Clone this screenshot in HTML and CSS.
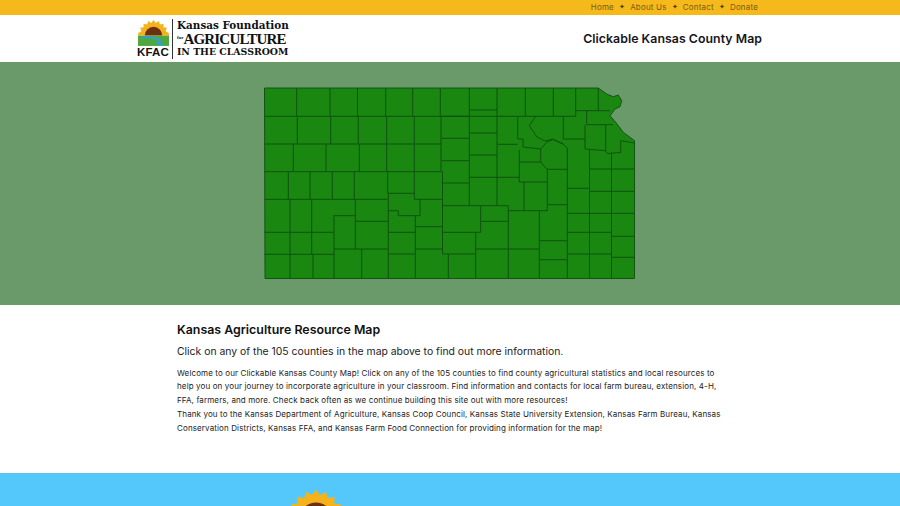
FILE: index.html
```html
<!DOCTYPE html>
<html lang="en">
<head>
<meta charset="utf-8">
<title>Clickable Kansas County Map</title>
<link rel="stylesheet" href="styles.css">
</head>
<body>
<svg class="defs" width="0" height="0" aria-hidden="true">
  <symbol id="sun" viewBox="0 0 30 26">
    <path fill="#f4b21c" d="M0 16 L0.200 13.400 L3.300 11.700 L2 8.500 L5.400 8 L5.400 4.500 L8.800 5.200 L9.900 1.900 L12.800 3.700 L15 0.900 L17.200 3.700 L20.100 1.900 L21.300 5.200 L24.600 4.500 L24.600 8 L28 8.500 L26.700 11.700 L29.800 13.400 L30 16 Z"/>
    <path fill="#6b2f14" d="M6.500 16 A8.500 8.500 0 0 1 23.500 16 Z"/>
    <rect y="16" width="30" height="10" fill="#4fa83d"/>
    <path fill="none" stroke="#2f9fd8" stroke-width="2" d="M4 18 C10 17 16 18 20 20 C23 21.500 22 23 18 23.500 L24 25"/>
  </symbol>
</svg>

<div class="topbar">
  <nav class="topnav">
    <a>Home</a><span class="star">✦</span><a>About Us</a><span class="star">✦</span><a>Contact</a><span class="star">✦</span><a>Donate</a>
  </nav>
</div>

<header class="header">
  <div class="logo">
    <div class="logo-mark">
      <svg class="logo-sun"><use href="#sun"/></svg>
      <div class="logo-kfac">KFAC</div>
    </div>
    <div class="logo-words">
      <div class="logo-l1">Kansas Foundation</div>
      <div class="logo-l2"><span class="logo-for">for</span>AGRICULTURE</div>
      <div class="logo-l3">IN THE CLASSROOM</div>
    </div>
  </div>
  <div class="site-title">Clickable Kansas County Map</div>
</header>

<section class="map-band">
  <svg class="map" viewBox="264 87 372 192" width="372" height="192" role="img" aria-label="Map of Kansas counties">
    <path class="state" d="M264.500 88 H598.300 L606.700 94 L613.300 96.700 L618.300 95 L621.700 100.700 L620 106.700 L615 109 L610 115.700 L615.700 122.300 L623.300 132.300 L634.500 140.700 V278.500 H265 Z"/>
    <path class="lines" d="
      M264.500 116.300 H575.700 M264.500 144 H441 M264.500 171.700 H441.700 M264.500 199.300 H387.700 M264.500 232.300 H334 M264.500 254.300 H334
      M296.700 88 V116.300 M330 88 V116.300 M357.500 88 V116.300 M385.700 88 V116.300 M412.700 88 V116.300 M440.300 88 V116.300
      M297.300 116.300 V144 M330.700 116.300 V144 M358.300 116.300 V144 M386.700 116.300 V144 M414.300 116.300 V144
      M293.300 144 V171.700 M326 144 V171.700 M359.300 144 V171.700 M386.700 144 V171.700 M414.300 144 V199.300 H442.300
      M288.300 171.700 V199.300 M310 171.700 V199.300 M332.300 171.700 V199.300 M354.300 171.700 V199.300 M387.700 171.700 V193.300 H414.300
      M290 199.300 V278 M311.700 199.300 V254.300 M313 254.300 V278 M334 215.700 V278 M333.300 215.700 H355.300 M355.300 199.300 V249
      M334 249 H388 M355.300 221.300 H388 M361.700 249 V278 M388.300 193.300 V278 M388.300 210.700 H398.300 V215.700 H420 V199.300
      M388.300 232.300 H415.300 M388.300 254 H415.300 M415.300 215.700 V278 M415.300 226.700 H442.500 M415.300 249 H442.500 M448.300 254 V278
      M441 116.300 V171 M441 116.300 H469 M441.500 138.300 H469 M441.700 160.700 H469 M441.700 183 H469 M442.500 171 V254
      M469.300 88 V205.700 M497 88 V205.700 M525.300 88 V116.300 M553.300 88 V116.300 M575.700 88 V116.300 M598.300 88 V110.700
      M469.300 110 H497 M469.300 133 H497 M469.300 155 H497 M469.300 177.300 H519.300
      M442.300 205.700 H508.300 M480.700 205.700 V232.300 M442.500 232.300 H480.700 M480.700 221.300 H508.300 M442.500 254 H475.700 M475.700 232.300 V278 M475.700 249 H539.300
      M508.300 205.700 V278 M508.300 210.700 H547.300 M524 182 V210.700 M547.300 169.300 V210.700 M539.300 210.700 V278
      M497 144.300 H517.700 M517.700 116.300 V139 H523 L523 147 L540.700 149 M519.300 150 V182 M519.300 162 H540.700 M519.300 182 H547
      M535.700 116.300 L529.300 125.700 L537 137 L545 141 L553 139 L563.300 144 M563.300 116.300 V139 H585
      M540.700 149 L546.700 142 L553 139.500 L563 144 L567.300 148 V278 M540.700 149 V162 L547 169.300 H567.300
      M547.300 204.700 H567.300 M539.300 240.700 H567.300 M539.300 259.700 H567.300
      M575.700 110.700 H610 M586.700 110.700 V124.700 H613 M585 124.700 V149 L605.700 150.700 L607 153.500 L620.700 152.500 V140.700 L634.500 143 M605.700 124.700 V150.700
      M589.500 149.500 V278 M611.500 153 V278 M589.500 169 H634.500 M567.300 188.300 H589.500 M589.500 191.300 H634.500 M567.300 213.300 H634.500
      M567.300 232.300 H611.500 M611.500 236.300 H634.500 M567.300 254 H611.500 M611.500 257.300 H634.500"/>
  </svg>
</section>

<main class="content">
  <h1 class="content-title">Kansas Agriculture Resource Map</h1>
  <h2 class="content-sub">Click on any of the 105 counties in the map above to find out more information.</h2>
  <p class="content-body">Welcome to our Clickable Kansas County Map! Click on any of the 105 counties to find county agricultural statistics and local resources to<br>help you on your journey to incorporate agriculture in your classroom. Find information and contacts for local farm bureau, extension, 4-H,<br>FFA, farmers, and more. Check back often as we continue building this site out with more resources!<br>Thank you to the Kansas Department of Agriculture, Kansas Coop Council, Kansas State University Extension, Kansas Farm Bureau, Kansas<br>Conservation Districts, Kansas FFA, and Kansas Farm Food Connection for providing information for the map!</p>
</main>

<footer class="footer">
  <svg class="footer-sun"><use href="#sun"/></svg>
</footer>
</body>
</html>
```

FILE: styles.css
```css
* { box-sizing: border-box; }

html, body {
  margin: 0;
  height: 506px;
  overflow: hidden;
  background: #fff;
  font-family: Inter, "Open Sans", sans-serif;
  color: #111;
}

.defs { position: absolute; }

.topbar {
  height: 15px;
  background: #f5b91c;
  display: flex;
  justify-content: flex-end;
  padding-right: 142px;
}

.topnav {
  display: flex;
  align-items: center;
  padding-bottom: 2px;
  font-size: 8px;
  color: #7a5c12;
  letter-spacing: 0.18px;
}

.star { margin: 0 5px; font-size: 7px; color: #4a3a10; }

.header {
  height: 47px;
  display: flex;
  justify-content: space-between;
  align-items: center;
  padding: 0 138px 0 137px;
}

.logo { display: flex; height: 40px; margin-top: 1px; }

.logo-mark {
  width: 36px;
  border-right: 1px solid #333;
  display: flex;
  flex-direction: column;
}

.logo-sun { width: 31px; height: 27px; margin: 0 0 0 1px; display: block; }

.logo-kfac {
  font-family: "Liberation Sans", sans-serif;
  font-weight: 700;
  font-size: 11.5px;
  line-height: 12px;
  color: #111;
  letter-spacing: 0.2px;
}

.logo-words {
  margin-left: 4px;
  font-family: "DejaVu Serif", serif;
  font-weight: 700;
  color: #111;
  white-space: nowrap;
}

.logo-l1 { font-size: 10.4px; line-height: 12px; letter-spacing: 0.02px; }
.logo-l2 { font-size: 15px; line-height: 14px; font-family: "Liberation Serif", serif; letter-spacing: -0.8px; }
.logo-for { font-size: 5px; vertical-align: 5px; letter-spacing: 0; }
.logo-l3 { font-size: 9.4px; line-height: 12.5px; letter-spacing: -0.02px; }

.site-title {
  font-size: 12.3px;
  font-weight: 600;
  letter-spacing: 0.05px;
  color: #15151c;
  margin-top: -1px;
}

.map-band {
  height: 243px;
  background: #6b9a6a;
  display: flex;
  justify-content: center;
  padding-top: 25px;
}

.map { display: block; }
.state { fill: #1a8710; }
.lines, .state { stroke: #0e4d12; stroke-width: 0.9; stroke-linejoin: round; }
.lines { fill: none; }

.content {
  height: 168px;
  padding: 17px 0 0 177px;
  white-space: nowrap;
}

.content-title {
  margin: 0;
  font-size: 12.4px;
  line-height: 15px;
  font-weight: 600;
  color: #111;
}

.content-sub {
  margin: 8px 0 0;
  font-size: 10.4px;
  line-height: 14px;
  font-weight: 400;
  color: #222;
}

.content-body {
  margin: 7.500px 0 0;
  font-size: 8px;
  line-height: 13.8px;
  letter-spacing: 0.12px;
  color: #222;
}

.footer {
  height: 33px;
  background: #55c8fb;
  padding: 15px 0 0 287px;
  overflow: hidden;
}

.footer-sun { width: 58px; height: 50px; display: block; }
```
